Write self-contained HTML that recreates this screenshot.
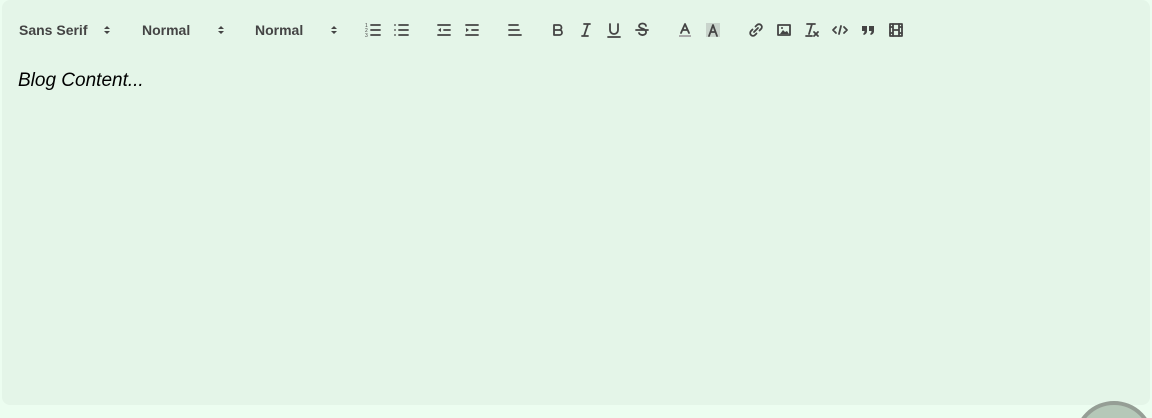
<!DOCTYPE html><html><head><style>
html,body{margin:0;width:1152px;height:418px;overflow:hidden}
body{background:#ecfdf0;position:relative;font-family:"Liberation Sans",Arial,sans-serif}
.wrap{position:absolute;left:0;top:0;width:1152px;height:418px;overflow:hidden}
.panel{position:absolute;left:2px;top:0;width:1148px;height:405px;background:#e4f5e8;border-radius:8px}
.lbl{position:absolute;top:22px;font-size:14px;font-weight:bold;color:#444}
.arr{position:absolute;top:24px}
svg.i{position:absolute;top:21px;width:18px;height:18px}
.i .s{fill:none;stroke:#444;stroke-width:1.8;stroke-linecap:round;stroke-linejoin:round}
.i .f{fill:#444}
.txt{position:absolute;left:18px;top:70px;font-size:19px;font-style:italic;color:#000}
.circ{position:absolute;left:1074px;top:401px;width:72px;height:72px;border-radius:50%;background:#b5c8b8;border:4px solid #959e95}
</style></head><body><div class="wrap">
<div class="panel"></div>
<div class="lbl" style="left:19px">Sans Serif</div>
<div class="lbl" style="left:142px">Normal</div>
<div class="lbl" style="left:255px">Normal</div>
<svg class="arr" style="left:103px" width="8" height="12"><path d="M1 5 L4 2 L7 5Z M1 7 L4 10 L7 7Z" fill="#444"/></svg>
<svg class="arr" style="left:217px" width="8" height="12"><path d="M1 5 L4 2 L7 5Z M1 7 L4 10 L7 7Z" fill="#444"/></svg>
<svg class="arr" style="left:330px" width="8" height="12"><path d="M1 5 L4 2 L7 5Z M1 7 L4 10 L7 7Z" fill="#444"/></svg>
<svg class="i" style="left:364px" viewBox="0 0 18 18"><path class="s" d="M7 4h9M7 9h9M7 14h9"/><text x="1" y="6" font-size="5" fill="#444">1</text><text x="1" y="11" font-size="5" fill="#444">2</text><text x="1" y="16" font-size="5" fill="#444">3</text></svg>
<svg class="i" style="left:392px" viewBox="0 0 18 18"><path class="s" d="M7 4h9M7 9h9M7 14h9M3 4h0M3 9h0M3 14h0"/></svg>
<svg class="i" style="left:435px" viewBox="0 0 18 18"><path class="s" d="M3 14h12M3 4h12M9 9h6"/><path class="f" d="M6 7v4L3 9z"/></svg>
<svg class="i" style="left:463px" viewBox="0 0 18 18"><path class="s" d="M3 14h12M3 4h12M9 9h6"/><path class="f" d="M3 7v4l3-2z"/></svg>
<svg class="i" style="left:506px" viewBox="0 0 18 18"><path class="s" d="M3 9h10M3 14h12M3 4h9"/></svg>
<svg class="i" style="left:549px" viewBox="0 0 18 18"><path class="s" d="M5 4h5a2.5 2.5 0 0 1 0 5H5zM5 9h5.5a2.5 2.5 0 0 1 0 5H5z"/></svg>
<svg class="i" style="left:577px" viewBox="0 0 18 18"><path class="s" d="M7 3h6M5 15h6M11 3L7 15"/></svg>
<svg class="i" style="left:605px" viewBox="0 0 18 18"><path class="s" d="M5 3v6a4 4 0 0 0 8 0V3M3 16h12"/></svg>
<svg class="i" style="left:633px" viewBox="0 0 18 18"><path class="s" d="M13 5a3.5 2.5 0 0 0-7 0c0 3 7 2 7 6a3.5 2.5 0 0 1-7 1M3 9h12"/></svg>
<svg class="i" style="left:676px" viewBox="0 0 18 18"><path d="M3 15h12" stroke="#aaa" stroke-width="2"/><path class="s" d="M5 12L9 3l4 9M6.5 9h5"/></svg>
<svg class="i" style="left:704px" viewBox="0 0 18 18"><rect x="2" y="2" width="14" height="14" fill="#999" opacity=".35"/><path class="s" d="M5 15L9 4l4 11M6.5 11h5"/></svg>
<svg class="i" style="left:747px" viewBox="0 0 18 18"><path class="s" d="M7 11l4-4M8.5 5.5l1.5-1.5a2.8 2.8 0 0 1 4 4L12.5 9.5M9.5 12.5L8 14a2.8 2.8 0 0 1-4-4l1.5-1.5"/></svg>
<svg class="i" style="left:775px" viewBox="0 0 18 18"><rect class="s" x="3" y="4" width="12" height="10"/><path class="f" d="M5 13l3-4 2 2 2-1 2 3z"/><circle class="f" cx="7" cy="7" r="1"/></svg>
<svg class="i" style="left:803px" viewBox="0 0 18 18"><path class="s" d="M4 3h8M9 3L6 13M3 15h6M11 11l4 4M15 11l-4 4"/></svg>
<svg class="i" style="left:831px" viewBox="0 0 18 18"><path class="s" d="M5 6L2 9l3 3M13 6l3 3-3 3M10 5L8 13"/></svg>
<svg class="i" style="left:859px" viewBox="0 0 18 18"><path class="f" d="M3 5h5v5c0 2-1 3-3 4l-1-1c1-1 1.5-1.5 1.5-3H3zM10 5h5v5c0 2-1 3-3 4l-1-1c1-1 1.5-1.5 1.5-3H10z"/></svg>
<svg class="i" style="left:887px" viewBox="0 0 18 18"><rect class="s" x="3" y="3" width="12" height="12"/><path class="s" d="M6 3v12M12 3v12M6 9h6M3 6h3M3 12h3M12 6h3M12 12h3"/></svg>
<div class="txt">Blog Content...</div>
<div class="circ"></div>
</div></body></html>
